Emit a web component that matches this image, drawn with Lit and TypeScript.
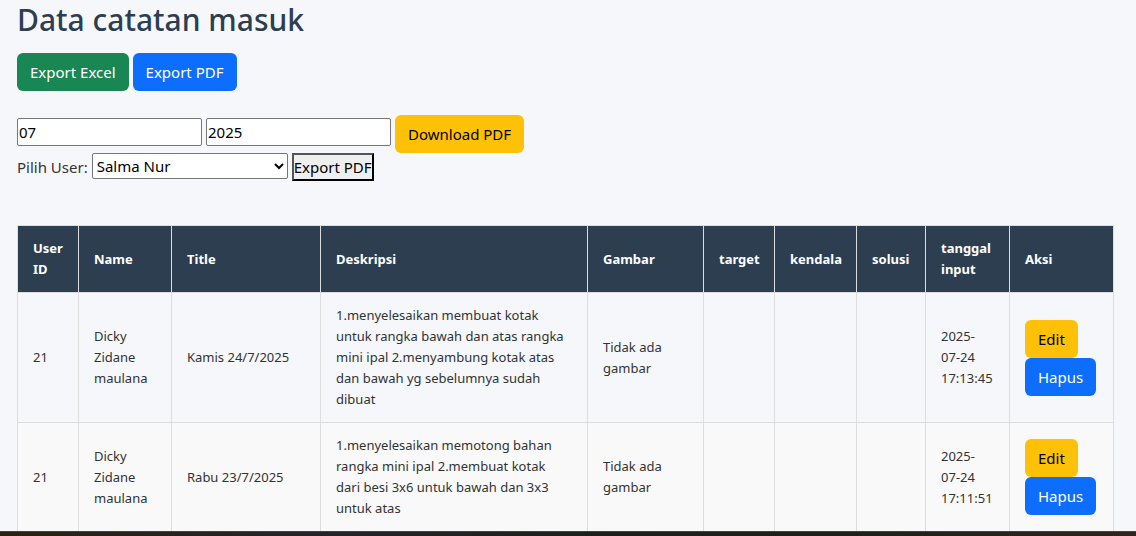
import { LitElement, html, css } from "lit";
import { customElement, state } from "lit/decorators.js";

interface Note {
  userId: number;
  name: string;
  title: string;
  description: string;
  createdAt: string;
}

const NOTES: Note[] = [
  {
    userId: 21,
    name: "Dicky Zidane maulana",
    title: "Kamis 24/7/2025",
    description:
      "1.menyelesaikan membuat kotak untuk rangka bawah dan atas rangka mini ipal 2.menyambung kotak atas dan bawah yg sebelumnya sudah dibuat",
    createdAt: "2025-07-24 17:13:45",
  },
  {
    userId: 21,
    name: "Dicky Zidane maulana",
    title: "Rabu 23/7/2025",
    description:
      "1.menyelesaikan memotong bahan rangka mini ipal 2.membuat kotak dari besi 3x6 untuk bawah dan 3x3 untuk atas",
    createdAt: "2025-07-24 17:11:51",
  },
];

@customElement("app-root")
export class AppRoot extends LitElement {
  static styles = css`
    :host {
      display: flex;
      flex-direction: column;
      height: 100vh;
      overflow: hidden;
      background: #f5f7fb;
      color: #333;
      font-family: "Segoe UI", "Noto Sans", sans-serif;
      font-size: 15px;
      line-height: 24px;
    }
    *, *::before, *::after { box-sizing: border-box; }
    .page {
      flex: 1;
      min-height: 0;
      overflow: hidden;
      padding: 0 22px 0 17px;
    }
    .heading {
      margin: 0 0 13px;
      color: #2c3e50;
      font-size: 30px;
      font-weight: 500;
      line-height: 40px;
    }
    .toolbar { display: flex; align-items: center; gap: 4px; }
    .exports { margin-bottom: 24px; }
    .by-user { align-items: flex-start; margin-bottom: 44px; }
    .btn {
      display: inline-block;
      padding: 6px 12px;
      border: 1px solid transparent;
      border-radius: 6px;
      font: inherit;
      text-decoration: none;
      white-space: nowrap;
      cursor: pointer;
    }
    .success { background: #198754; color: #fff; }
    .primary { background: #0d6efd; color: #fff; }
    .warning { background: #ffc107; color: #000; }
    .field {
      width: 185px;
      height: 28px;
      margin: 0 0 4px;
      padding: 1px;
      border: 1px solid #767676;
      border-radius: 2px;
      background: #fff;
      color: #000;
      font: inherit;
    }
    .user-label { padding-top: 2px; }
    .user-select {
      width: 196px;
      height: 26px;
      padding: 0;
      border: 1px solid #767676;
      border-radius: 2px;
      background-color: #fff;
      color: #000;
      font: inherit;
    }
    .plain {
      height: 28px;
      padding: 0;
      border: 2px outset #000;
      border-radius: 0;
      background: #efefef;
      color: #000;
      font: inherit;
      white-space: nowrap;
    }
    .table {
      width: 100%;
      table-layout: fixed;
      border-collapse: collapse;
      font-size: 13px;
      line-height: 21px;
    }
    .table th, .table td {
      padding: 12px 15px;
      border: 1px solid #ddd;
      text-align: left;
      vertical-align: middle;
    }
    .table th { background: #2c3e50; color: #fff; font-weight: 700; }
    .table .date { padding-right: 16px; }
    .table tbody tr:nth-child(even) { background: #f9f9f9; }
    .c-id { width: 61px; }
    .c-name { width: 93px; }
    .c-title { width: 149px; }
    .c-image { width: 116px; }
    .c-target { width: 71px; }
    .c-kendala { width: 82px; }
    .c-solusi { width: 69px; }
    .c-date { width: 84px; }
    .c-action { width: 104px; }
    .actions {
      display: flex;
      flex-direction: column;
      align-items: flex-start;
      font-size: 15px;
      line-height: 24px;
    }
    .taskbar {
      flex: none;
      height: 5px;
      border-top: 1px solid #444;
      background: linear-gradient(90deg, #2b2112, #25222a 30%, #1b211a 52%, #1d211a 75%, #30231b);
    }
  `;

  @state() private month = "07";
  @state() private year = "2025";

  /** Lets a date wrap after the year only: "2025-" / "07-24". */
  private formatDate(value: string) {
    const [date, time] = value.split(" ");
    const [year, month, day] = date.split("-");
    return html`${year}-<br />${month}-${day} ${time}`;
  }

  render() {
    return html`
      <main class="page">
        <h2 class="heading">Data catatan masuk</h2>
        <div class="toolbar exports">
          <a class="btn success" href="#excel">Export Excel</a>
          <a class="btn primary" href="#pdf">Export PDF</a>
        </div>
        <form class="toolbar" @submit=${this.hold}>
          <input class="field" type="text" aria-label="Bulan" .value=${this.month}
            @input=${(e: Event) => (this.month = (e.target as HTMLInputElement).value)} />
          <input class="field" type="text" aria-label="Tahun" .value=${this.year}
            @input=${(e: Event) => (this.year = (e.target as HTMLInputElement).value)} />
          <button class="btn warning" type="submit">Download PDF</button>
        </form>
        <form class="toolbar by-user" @submit=${this.hold}>
          <label class="user-label" for="user">Pilih User:</label>
          <select class="user-select" id="user">
            <option>Salma Nur</option>
            <option>Dicky Zidane maulana</option>
          </select>
          <button class="plain" type="submit">Export PDF</button>
        </form>
        <table class="table">
          <colgroup>
            <col class="c-id" /><col class="c-name" /><col class="c-title" /><col />
            <col class="c-image" /><col class="c-target" /><col class="c-kendala" />
            <col class="c-solusi" /><col class="c-date" /><col class="c-action" />
          </colgroup>
          <thead>
            <tr>
              <th>User ID</th><th>Name</th><th>Title</th><th>Deskripsi</th><th>Gambar</th>
              <th>target</th><th>kendala</th><th>solusi</th><th>tanggal input</th><th>Aksi</th>
            </tr>
          </thead>
          <tbody>
            ${NOTES.map(
              (n) => html`<tr>
                <td>${n.userId}</td>
                <td>${n.name}</td>
                <td>${n.title}</td>
                <td>${n.description}</td>
                <td>Tidak ada gambar</td>
                <td></td><td></td><td></td>
                <td class="date">${this.formatDate(n.createdAt)}</td>
                <td>
                  <div class="actions">
                    <a class="btn warning" href="#edit">Edit</a>
                    <button class="btn primary" type="button">Hapus</button>
                  </div>
                </td>
              </tr>`
            )}
          </tbody>
        </table>
      </main>
      <footer class="taskbar"></footer>
    `;
  }

  private hold(e: Event) {
    e.preventDefault();
  }
}
